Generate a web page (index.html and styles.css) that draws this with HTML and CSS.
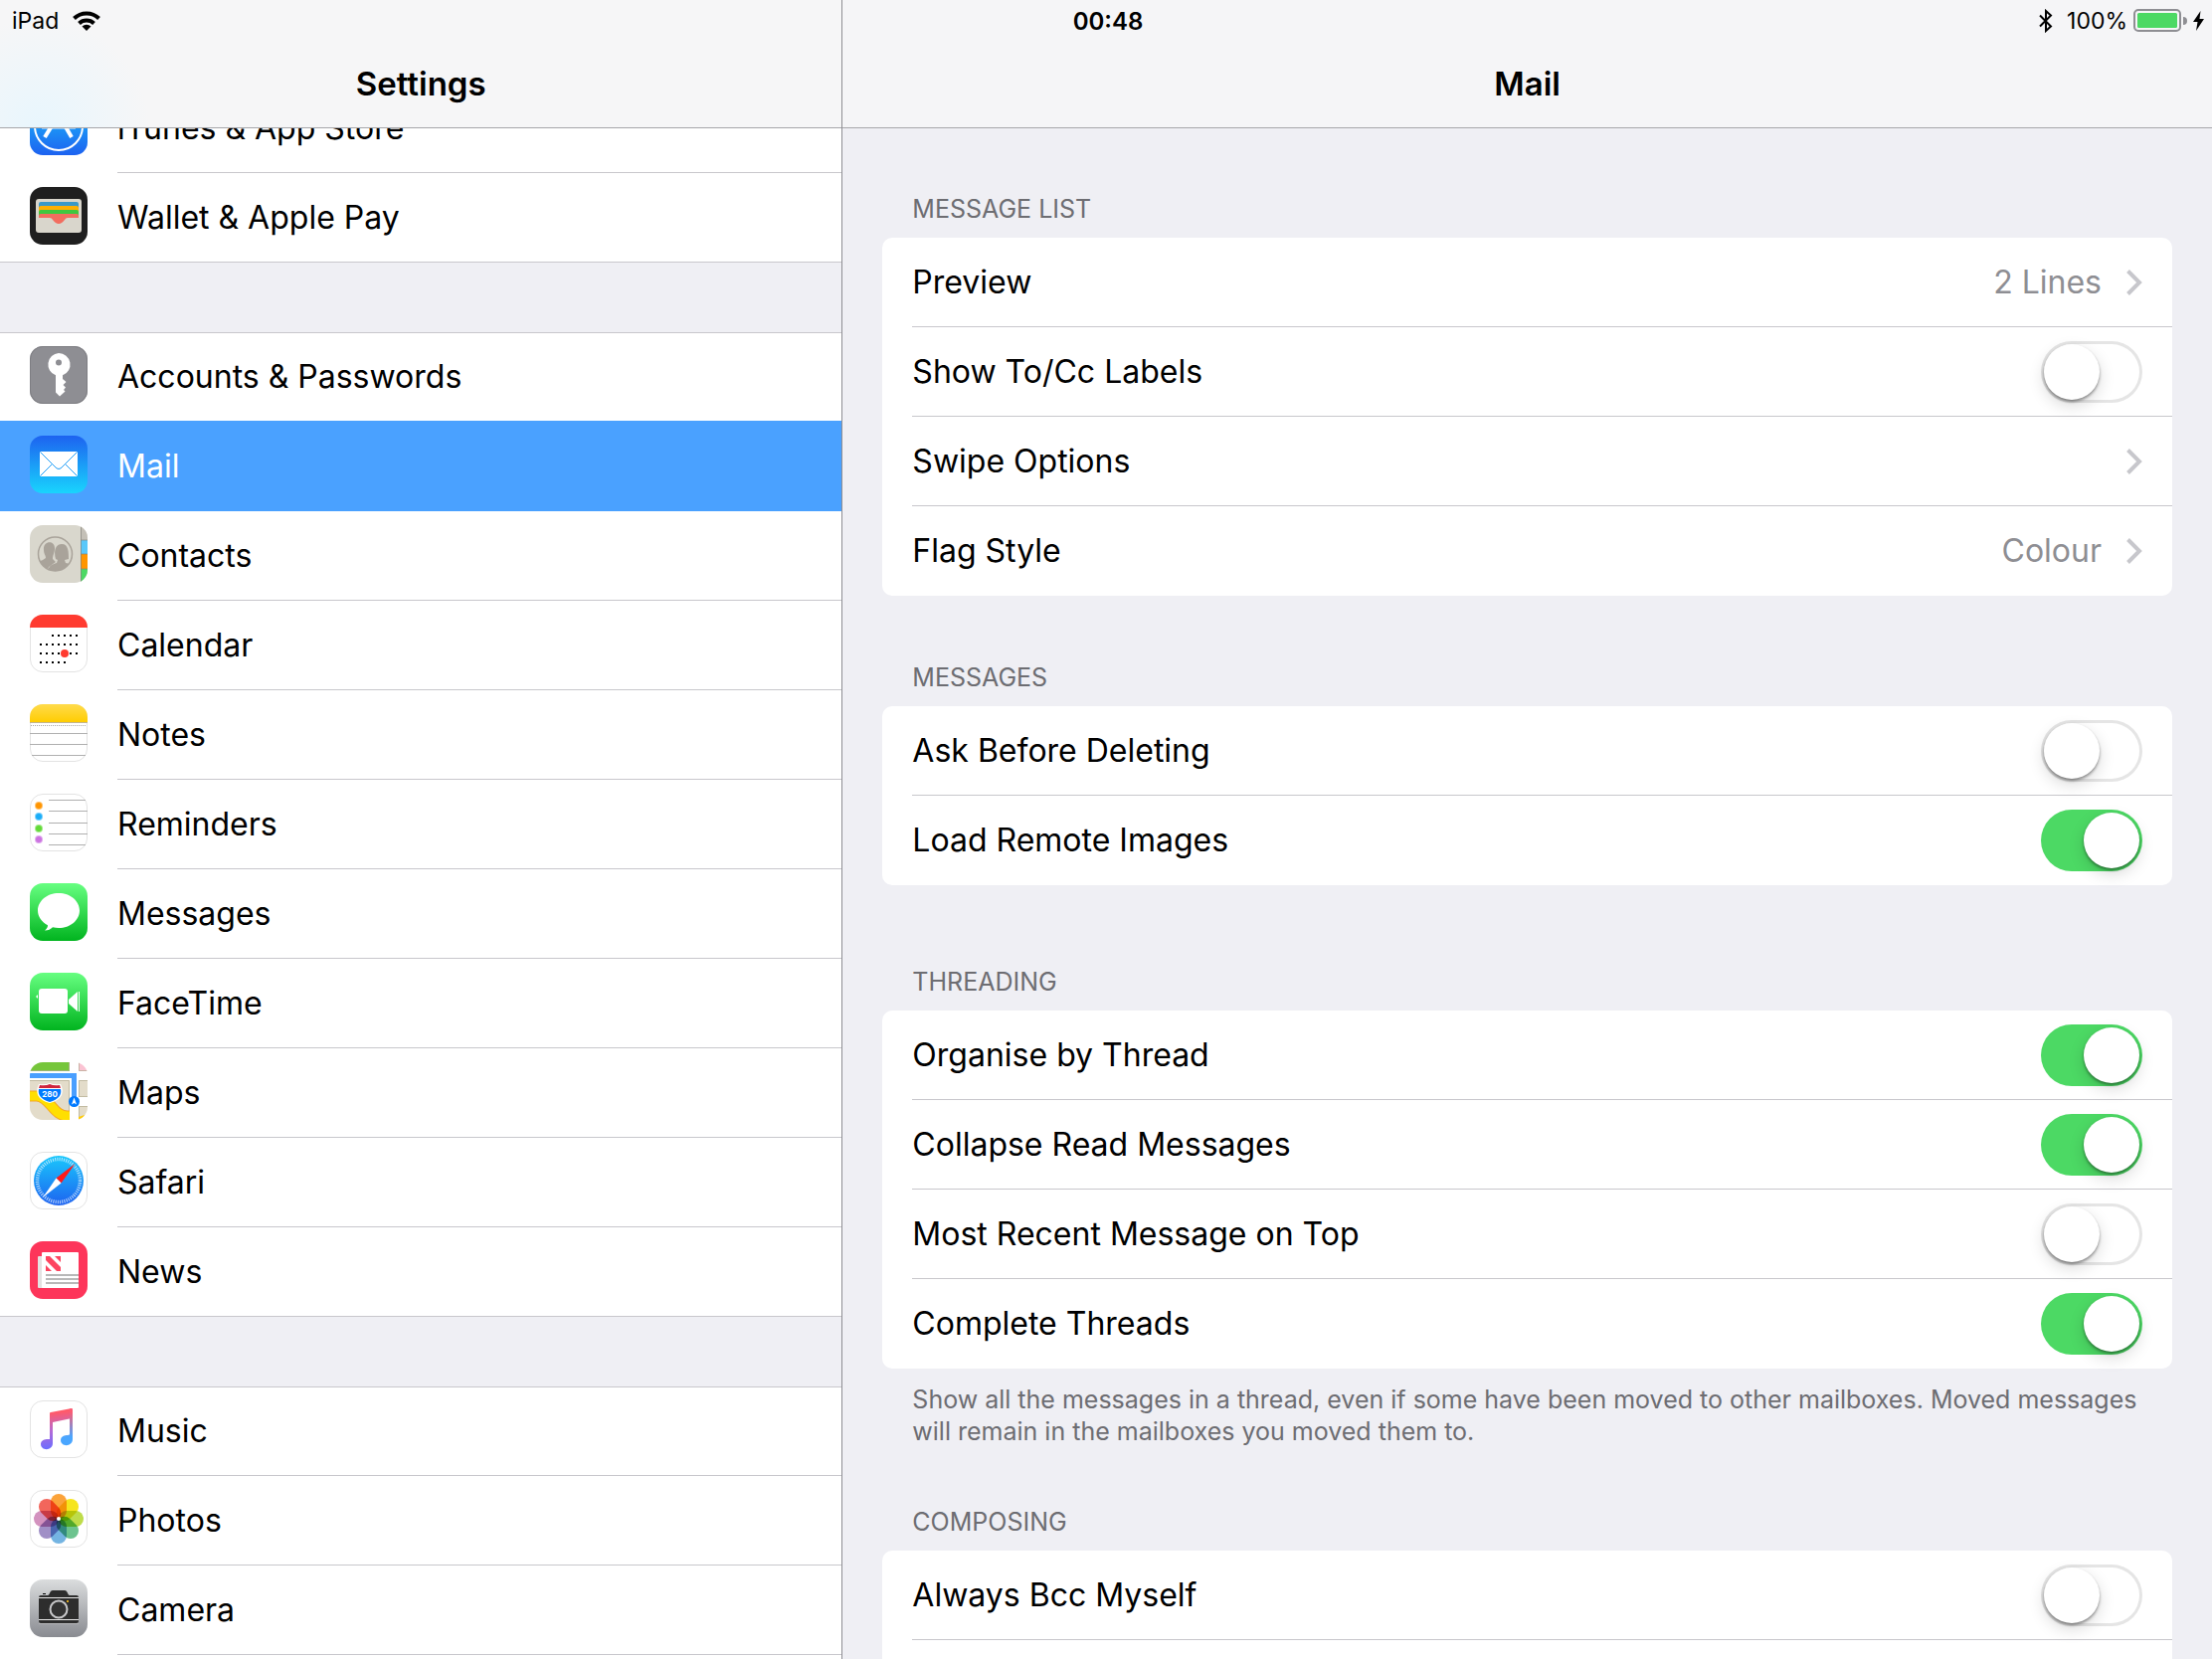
FILE: index.html
```html
<!DOCTYPE html>
<html lang="en">
<head>
    <meta charset="utf-8">
    <title>Settings</title>
    <link rel="stylesheet" href="styles.css">
</head>
<body>
    <div class="status-bar">
        <div class="status-left">
            <span>iPad</span>
            <svg width="28" height="20" viewBox="0 0 28 20">
                <g fill="none" stroke="#000" stroke-width="4">
                    <path d="M1.5 7.5a18 18 0 0 1 25 0"/>
                    <path d="M6.5 12.5a11 11 0 0 1 15 0"/>
                </g>
                <path d="M9.5 15.5a6.500 6.500 0 0 1 9 0L14 20z"/>
            </svg>
        </div>
        <div class="status-time">00:48</div>
        <div class="status-right">
            <svg width="14" height="24" viewBox="0 0 14 24">
                <path d="M1 6.500l11 11-5 4.500V2l5 4.500-11 11" fill="none" stroke="#000" stroke-width="2"/>
            </svg>
            <span class="percent">100%</span>
            <svg width="54" height="24" viewBox="0 0 54 24">
                <rect x="1" y="1" width="46" height="21" rx="4" fill="none" stroke="#8e8e93" stroke-width="2"/>
                <rect x="4" y="4" width="40" height="15" rx="1.500" fill="#4cd964"/>
                <path d="M50 8a4 4 0 0 1 0 8z" fill="#8e8e93"/>
            </svg>
            <svg width="11" height="20" viewBox="0 0 11 20">
                <path d="M7.500 0L0 11h4.500L3 20l8-12H6.500z"/>
            </svg>
        </div>
    </div>

    <nav class="sidebar">
        <header class="bar bar-tint"><h1>Settings</h1></header>
        <div class="list-scroll">
            <div class="list">
                <a class="item" href="#">
                    <svg class="icon" viewBox="0 0 58 58">
                        <defs><linearGradient id="store" x2="0" y2="1"><stop offset="0" stop-color="#1ac8fc"/><stop offset="1" stop-color="#1d62f0"/></linearGradient></defs>
                        <rect width="58" height="58" rx="13" fill="url(#store)"/>
                        <circle cx="29" cy="29" r="24" fill="none" stroke="#fff" stroke-width="2"/>
                        <path d="M31 14L15 40M27 14l15 26" stroke="#fff" stroke-width="4"/>
                        <path d="M12 30h34" stroke="#fff" stroke-width="3"/>
                    </svg>
                    <span class="name">iTunes &amp; App Store</span>
                </a>
                <a class="item" href="#">
                    <svg class="icon" viewBox="0 0 58 58">
                        <rect width="58" height="58" rx="13" fill="#1f1f1f"/>
                        <rect x="6" y="12" width="46" height="34" rx="3" fill="#d9d6cc"/>
                        <path d="M9 31V17q0-2 2-2h36q2 0 2 2v14z" fill="#3b99c9"/>
                        <path d="M9 31V21q0-2 2-2h36q2 0 2 2v10z" fill="#ffb003"/>
                        <path d="M9 31v-6q0-2 2-2h36q2 0 2 2v6z" fill="#40c740"/>
                        <path d="M9 31v-2q0-2 2-2h36q2 0 2 2v2H38q-2 0-3 2-3 4-6 4t-6-4q-1-2-3-2z" fill="#f26d5f"/>
                    </svg>
                    <span class="name">Wallet &amp; Apple Pay</span>
                </a>
            </div>

            <div class="list">
                <a class="item" href="#">
                    <svg class="icon" viewBox="0 0 58 58">
                        <rect width="58" height="58" rx="13" fill="#8e8e93"/>
                        <rect x=".5" y=".5" width="57" height="57" rx="12.500" fill="none" stroke="#7e7e83"/>
                        <path d="M29 7a11.500 11.500 0 0 1 4 22.300V33l3.500 3-3 3 2.500 2.500-2 2.500 1.500 1.500-5.500 5-4-4V29.300A11.500 11.500 0 0 1 29 7z" fill="#fff"/>
                        <circle cx="29" cy="16.500" r="3" fill="#8e8e93"/>
                    </svg>
                    <span class="name">Accounts &amp; Passwords</span>
                </a>
                <a class="item selected" href="#">
                    <svg class="icon" viewBox="0 0 58 58">
                        <defs><linearGradient id="mail" x2="0" y2="1"><stop offset="0" stop-color="#1d62f0"/><stop offset="1" stop-color="#19d5fd"/></linearGradient></defs>
                        <rect width="58" height="58" rx="13" fill="url(#mail)"/>
                        <rect x="10" y="16" width="38" height="25" rx="1" fill="#fff"/>
                        <path d="M10.500 16.500L25 31q4 5 8 0l14.500-14.500M10.500 40.500l12-12M47.500 40.500l-12-12" fill="none" stroke="#1e9cf6" stroke-width="1"/>
                    </svg>
                    <span class="name">Mail</span>
                </a>
                <a class="item" href="#">
                    <svg class="icon" viewBox="0 0 58 58">
                        <defs>
                            <clipPath id="round"><rect width="58" height="58" rx="13"/></clipPath>
                            <clipPath id="disc"><circle cx="25.500" cy="29" r="17"/></clipPath>
                        </defs>
                        <g clip-path="url(#round)">
                            <path d="M0 0h58v58H0z" fill="#d9d7cd"/>
                            <path d="M51 0h7v15h-7z" fill="#c4c0b7"/>
                            <path d="M51 15h7v14h-7z" fill="#5ac8fa"/>
                            <path d="M51 29h7v15h-7z" fill="#ff9500"/>
                            <path d="M51 44h7v14h-7z" fill="#4cd964"/>
                            <path d="M51.500 0v58M51 15h7M51 29h7M51 44h7" stroke="#86837a" stroke-opacity=".7"/>
                        </g>
                        <g clip-path="url(#disc)" fill="#a9a39a">
                            <path d="M14 25c-1-10 11-10 11-2 0 5-2 7-2 11l3 3-7 5-2 6L5 38l8-3 3-2c0-3-2-4-2-8z"/>
                            <path d="M26 34c-2-6-1-15 6-15s7 8 7 15l-4 1 1 3 9 2-6 10H18c0-9 3-10 9-12l1-3z"/>
                        </g>
                        <circle cx="25.500" cy="29" r="17" fill="none" stroke="#a9a39a" stroke-width="1.500"/>
                    </svg>
                    <span class="name">Contacts</span>
                </a>
                <a class="item" href="#">
                    <svg class="icon" viewBox="0 0 58 58">
                        <rect x=".5" y=".5" width="57" height="57" rx="12.500" fill="#fff" stroke="#e3e3e3"/>
                        <path d="M0 13A13 13 0 0 1 13 0h32a13 13 0 0 1 13 13z" fill="#ff3b30"/>
                        <path d="M22 21h27M10 30h39M10 39h39M10 48h27" stroke="#000" stroke-width="2" stroke-dasharray="2 4"/>
                        <circle cx="35" cy="39" r="4" fill="#ff3b30"/>
                    </svg>
                    <span class="name">Calendar</span>
                </a>
                <a class="item" href="#">
                    <svg class="icon" viewBox="0 0 58 58">
                        <defs><linearGradient id="note" x2="0" y2="1"><stop offset="0" stop-color="#ffdb4c"/><stop offset="1" stop-color="#ffcd02"/></linearGradient></defs>
                        <rect x=".5" y=".5" width="57" height="57" rx="12.500" fill="#fff" stroke="#e3e3e3"/>
                        <path d="M0 18v-5A13 13 0 0 1 13 0h32a13 13 0 0 1 13 13v5z" fill="url(#note)"/>
                        <path d="M0 18.500h58" stroke="#c2b48c"/>
                        <path d="M1 21.500h56" stroke="#a8a8a8" stroke-dasharray="1 1"/>
                        <path d="M0 29.500h58M0 40.500h58M2 51.500h54" stroke="#b0b0b0"/>
                    </svg>
                    <span class="name">Notes</span>
                </a>
                <a class="item" href="#">
                    <svg class="icon" viewBox="0 0 58 58">
                        <rect x=".5" y=".5" width="57" height="57" rx="12.500" fill="#fff" stroke="#e3e3e3"/>
                        <path d="M19 6.500h37M19 17.500h39M19 29.500h39M19 40.500h39M19 51.500h37" stroke="#b0b0b0"/>
                        <g stroke-opacity=".6" stroke-width="2">
                            <circle cx="9" cy="12" r="3" fill="#ff9500" stroke="#ff9500"/>
                            <circle cx="9" cy="23" r="3" fill="#1badf8" stroke="#1badf8"/>
                            <circle cx="9" cy="35" r="3" fill="#63da38" stroke="#63da38"/>
                            <circle cx="9" cy="46" r="3" fill="#cc73e1" stroke="#cc73e1"/>
                        </g>
                    </svg>
                    <span class="name">Reminders</span>
                </a>
                <a class="item" href="#">
                    <svg class="icon" viewBox="0 0 58 58">
                        <defs><linearGradient id="green" x2="0" y2="1"><stop offset="0" stop-color="#67ff81"/><stop offset="1" stop-color="#01b41f"/></linearGradient></defs>
                        <rect width="58" height="58" rx="13" fill="url(#green)"/>
                        <path d="M29 10c11.600 0 21 7.800 21 17.500S40.600 45 29 45c-2 0-4-.3-6-.8-2 2-5 3.400-8 3.300 2-1.500 3-3.500 3-5.300C12 39 8 33.600 8 27.500 8 17.800 17.400 10 29 10z" fill="#fff"/>
                    </svg>
                    <span class="name">Messages</span>
                </a>
                <a class="item" href="#">
                    <svg class="icon" viewBox="0 0 58 58">
                        <rect width="58" height="58" rx="13" fill="url(#green)"/>
                        <rect x="9" y="16" width="29" height="25" rx="3" fill="#fff"/>
                        <path d="M39 27l9-8v20l-9-8zM49 19h1v20h-1zM6 24l2-2v4z" fill="#fff"/>
                    </svg>
                    <span class="name">FaceTime</span>
                </a>
                <a class="item" href="#">
                    <svg class="icon" viewBox="0 0 58 58">
                        <g clip-path="url(#round)">
                            <path d="M0 0h58v58H0z" fill="#fff"/>
                            <path d="M0 0h40v9H0z" fill="#76c63b"/>
                            <path d="M49 0h9v9h-9z" fill="#fbc3d3"/>
                            <path d="M0 18h40v40H0zM49 18h9v17h-9zM49 44h9v14h-9z" fill="#e3dcca"/>
                            <path d="M0 18.500h39.500V58M49.500 35V18.500H58M49 34.500h9M49.500 58V44.500H58M0 8.500h39.500V0M49.500 0v8.500H58" fill="none" stroke="#b4ad91" stroke-opacity=".7"/>
                            <path d="M-2 34h9c14 1 16 21 32 20v9" fill="none" stroke="#f5a623" stroke-width="11"/>
                            <path d="M-2 34h9c14 1 16 21 32 20v9" fill="none" stroke="#ffdf00" stroke-width="9"/>
                            <path d="M40 18h9v40h-9z" fill="#fff"/>
                            <path d="M49 55l9-3v6h-9z" fill="#ffcb05"/>
                            <path d="M0 13.500h44.500V36" fill="none" stroke="#4a9fff" stroke-width="5"/>
                            <circle cx="44.500" cy="39.500" r="5.500" fill="#007aff"/>
                            <path d="M44.500 35.500l2.500 7-2.500-1.500-2.500 1.500z" fill="#fff"/>
                            <path d="M9 22q6 1 11-1 5 2 11 1 3 6 1 11-3 6-12 8-9-2-12-8-2-5 1-11z" fill="#fff"/>
                            <path d="M10 23q6 1 10-1 4 2 10 1l1 3H9z" fill="#d0243c"/>
                            <path d="M9 27h22q2 9-11 13Q7 36 9 27z" fill="#007aff"/>
                        </g>
                        <text class="route" x="20" y="35">280</text>
                    </svg>
                    <span class="name">Maps</span>
                </a>
                <a class="item" href="#">
                    <svg class="icon" viewBox="0 0 58 58">
                        <rect x=".5" y=".5" width="57" height="57" rx="12.500" fill="#fff" stroke="#e3e3e3"/>
                        <circle cx="29" cy="29" r="25" fill="url(#store)"/>
                        <circle cx="29" cy="29" r="21.500" fill="none" stroke="#fff" stroke-opacity=".7" stroke-width="3.500" stroke-dasharray="1 1.250"/>
                        <path d="M45.500 12L26.500 26.500l5 5z" fill="#ff1a1a"/>
                        <path d="M13 46l13.500-19.500 5 5z" fill="#fff"/>
                    </svg>
                    <span class="name">Safari</span>
                </a>
                <a class="item" href="#">
                    <svg class="icon" viewBox="0 0 58 58">
                        <rect width="58" height="58" rx="13" fill="#fd355a"/>
                        <rect x="8" y="15" width="8" height="32" rx="1" fill="#e4e2e2"/>
                        <rect x="12" y="11" width="37" height="36" rx="1" fill="#fff"/>
                        <path d="M16 15h4l11 11v4h-4L16 19zM25 15h6v6zM16 24v6h6z" fill="#fd4560"/>
                        <path d="M16 34h33M16 38h33M16 42h33" stroke="#b8b8b8" stroke-width="2"/>
                    </svg>
                    <span class="name">News</span>
                </a>
            </div>

            <div class="list">
                <a class="item" href="#">
                    <svg class="icon" viewBox="0 0 58 58">
                        <defs>
                            <linearGradient id="tune" gradientUnits="userSpaceOnUse" x1="26" y1="8" x2="30" y2="48"><stop offset=".1" stop-color="#ff5a6a"/><stop offset=".55" stop-color="#b46ad6"/><stop offset="1" stop-color="#6a6cff"/></linearGradient>
                            <linearGradient id="tune2" gradientUnits="userSpaceOnUse" x1="40" y1="8" x2="40" y2="44"><stop offset=".1" stop-color="#fb5c74"/><stop offset=".8" stop-color="#4aa6ff"/></linearGradient>
                        </defs>
                        <rect x=".5" y=".5" width="57" height="57" rx="12.500" fill="#fff" stroke="#e3e3e3"/>
                        <path d="M20 39V13q0-1 1-1l21-4v10l-19 4v21c0 8-12 8-12 1 0-4 4-5 7-5z" fill="url(#tune)"/>
                        <path d="M40 8.400l2-.4q1 0 1 1v30c0 8-12 8-12 1 0-4 4-5 7-5 2 0 2-1 2-2z" fill="url(#tune2)"/>
                    </svg>
                    <span class="name">Music</span>
                </a>
                <a class="item" href="#">
                    <svg class="icon petals" viewBox="0 0 58 58">
                        <rect x=".5" y=".5" width="57" height="57" rx="12.500" fill="#fff" stroke="#e3e3e3"/>
                        <rect class="petal" x="21" y="4" width="16" height="25" rx="8" fill="#fba33a"/>
                        <rect class="petal" x="21" y="4" width="16" height="25" rx="8" fill="#f6e51e" transform="rotate(45 29 29)"/>
                        <rect class="petal" x="21" y="4" width="16" height="25" rx="8" fill="#bedc4a" transform="rotate(90 29 29)"/>
                        <rect class="petal" x="21" y="4" width="16" height="25" rx="8" fill="#6cc38e" transform="rotate(135 29 29)"/>
                        <rect class="petal" x="21" y="4" width="16" height="25" rx="8" fill="#74b4e2" transform="rotate(180 29 29)"/>
                        <rect class="petal" x="21" y="4" width="16" height="25" rx="8" fill="#a08fc6" transform="rotate(225 29 29)"/>
                        <rect class="petal" x="21" y="4" width="16" height="25" rx="8" fill="#d392bf" transform="rotate(270 29 29)"/>
                        <rect class="petal" x="21" y="4" width="16" height="25" rx="8" fill="#f2665c" transform="rotate(315 29 29)"/>
                        <circle cx="29" cy="29" r="2" fill="#fff"/>
                    </svg>
                    <span class="name">Photos</span>
                </a>
                <a class="item" href="#">
                    <svg class="icon" viewBox="0 0 58 58">
                        <defs><linearGradient id="steel" x2="0" y2="1"><stop offset="0" stop-color="#dbddde"/><stop offset="1" stop-color="#898b91"/></linearGradient></defs>
                        <rect width="58" height="58" rx="13" fill="url(#steel)"/>
                        <path d="M9 18q0-2 2-2h7c2 0 2-5 5-5h12c3 0 3 5 5 5h7q2 0 2 2v24q0 2-2 2H11q-2 0-2-2z" fill="#2d2d2d"/>
                        <path d="M13 14.500h3" stroke="#000"/>
                        <path d="M9 18.500h40M9 40.500h40" stroke="#e8e8e8"/>
                        <path d="M9 44.500h40" stroke="#b4b5b8"/>
                        <circle cx="29" cy="30" r="8.500" fill="#333" stroke="#c8c8ca" stroke-width="2"/>
                        <path d="M37 21h2v2h-2z" fill="#d8a520"/>
                    </svg>
                    <span class="name">Camera</span>
                </a>
                <a class="item" href="#"><span class="name"></span></a>
            </div>
        </div>
    </nav>

    <main class="detail">
        <header class="bar"><h1>Mail</h1></header>
        <div class="detail-scroll">
            <section class="group">
                <h2>MESSAGE LIST</h2>
                <div class="card">
                    <a class="row" href="#">Preview <span class="value">2 Lines</span>
                        <svg class="chevron" viewBox="0 0 16 26"><path d="M1.500 1.500L13 13 1.500 24.500"/></svg></a>
                    <label class="row">Show To/Cc Labels <input class="switch" type="checkbox"></label>
                    <a class="row" href="#">Swipe Options <span class="value"></span>
                        <svg class="chevron" viewBox="0 0 16 26"><path d="M1.500 1.500L13 13 1.500 24.500"/></svg></a>
                    <a class="row" href="#">Flag Style <span class="value">Colour</span>
                        <svg class="chevron" viewBox="0 0 16 26"><path d="M1.500 1.500L13 13 1.500 24.500"/></svg></a>
                </div>
            </section>

            <section class="group">
                <h2>MESSAGES</h2>
                <div class="card">
                    <label class="row">Ask Before Deleting <input class="switch" type="checkbox"></label>
                    <label class="row">Load Remote Images <input class="switch" type="checkbox" checked></label>
                </div>
            </section>

            <section class="group threading">
                <h2>THREADING</h2>
                <div class="card">
                    <label class="row">Organise by Thread <input class="switch" type="checkbox" checked></label>
                    <label class="row">Collapse Read Messages <input class="switch" type="checkbox" checked></label>
                    <label class="row">Most Recent Message on Top <input class="switch" type="checkbox"></label>
                    <label class="row">Complete Threads <input class="switch" type="checkbox" checked></label>
                </div>
                <p class="footnote">Show all the messages in a thread, even if some have been moved to other mailboxes. Moved messages will remain in the mailboxes you moved them to.</p>
            </section>

            <section class="group composing">
                <h2>COMPOSING</h2>
                <div class="card">
                    <label class="row">Always Bcc Myself <input class="switch" type="checkbox"></label>
                    <a class="row" href="#"></a>
                </div>
            </section>
        </div>
    </main>
</body>
</html>
```
FILE: styles.css
```css
* {
    box-sizing: border-box;
}
body {
    margin: 0;
    height: 100vh;
    display: grid;
    grid-template-columns: 38.1% 1fr;
    overflow: hidden;
    background-color: #efeff4;
    color: #000;
    font-family: Inter, "Liberation Sans", sans-serif;
    font-size: 32px;
}
a {
    color: inherit;
    text-decoration: none;
}

/* Status bar, lies over both headers */
.status-bar {
    position: absolute;
    top: 0;
    left: 0;
    right: 0;
    z-index: 2;
    height: 42px;
    padding: 0 8px 0 12px;
    display: grid;
    grid-template-columns: 1fr auto 1fr;
    align-items: center;
    font-size: 23px;
}
.status-left, .status-right {
    display: flex;
    align-items: center;
    gap: 14px;
}
.status-right {
    justify-content: flex-end;
    gap: 6px;
}
.status-time {
    font-size: 24px;
    font-weight: 600;
}
.percent {
    margin-left: 8px;
}

/* Panes */
.sidebar, .detail {
    display: flex;
    flex-direction: column;
    min-width: 0;
    min-height: 0;
}
.sidebar {
    border-right: 1px solid #8e8e93;
}
.bar {
    flex: none;
    padding-top: 40px;
    border-bottom: 1px solid #a7a7aa;
    background-color: #f5f5f7;
}
.bar-tint {
    background: radial-gradient(circle at 40px 128px, #e8f6fd, #f6f6f7 110px);
}
.bar h1 {
    margin: 0;
    font-size: 33px;
    font-weight: 600;
    line-height: 88px;
    text-align: center;
}
.list-scroll, .detail-scroll {
    flex: 1;
    min-height: 0;
    overflow: hidden;
}

/* Sidebar list */
.list {
    margin-bottom: 70px;
    border-bottom: 1px solid #c8c7cc;
    background-color: #fff;
}
.list:first-child {
    margin-top: -45px; /* scrolled under the header */
}
.item {
    display: flex;
    gap: 30px;
    height: 90px;
    padding-left: 30px;
}
.item:first-child {
    border-top: 1px solid #c8c7cc;
}
.item:last-child {
    height: 89px;
}
.icon {
    flex: none;
    width: 58px;
    height: 58px;
    margin-top: 14px;
}
.item:first-child .icon {
    margin-top: 13px;
}
.name {
    flex: 1;
    display: flex;
    align-items: center;
    border-bottom: 1px solid #c8c7cc;
}
.item:first-child .name {
    padding-bottom: 2px;
}
.item:last-child .name {
    border-bottom: none;
}
/* Covers the separator of the row above */
.selected {
    position: relative;
    height: 91px;
    margin-top: -1px;
    padding-top: 1px;
    background-color: #4aa1ff;
    color: #fff;
}
.selected .name {
    border-color: #4aa1ff;
}
.route {
    fill: #fff;
    font-size: 8px;
    font-weight: 700;
    text-anchor: middle;
}
.petals {
    isolation: isolate;
}
.petal {
    mix-blend-mode: multiply;
}

/* Detail groups */
.detail-scroll {
    padding: 65px 40px 0;
}
.group {
    margin-bottom: 66px;
}
.group h2 {
    margin: 0 30px 13px;
    color: #6d6d72;
    font-size: 25px;
    font-weight: 400;
    line-height: 32px;
}
.threading {
    margin-top: 81px;
    margin-bottom: 0;
}
.composing {
    margin-top: 59px;
}
.card {
    padding-left: 30px;
    border-radius: 10px;
    background-color: #fff;
}
.row {
    display: flex;
    align-items: center;
    justify-content: space-between;
    height: 90px;
    padding-right: 30px;
    border-bottom: 1px solid #c8c7cc;
}
.row:last-child {
    border-bottom-color: transparent;
}
.value {
    margin-left: auto;
    margin-right: 25px;
    color: #8e8e93;
}
.chevron {
    width: 16px;
    height: 26px;
    fill: none;
    stroke: #c7c7cc;
    stroke-width: 4;
}
.footnote {
    margin: 15px 0 59px 30px;
    color: #6d6d72;
    font-size: 25px;
    line-height: 32px;
}

/* Switch */
.switch {
    appearance: none;
    flex: none;
    width: 102px;
    height: 62px;
    margin: 0;
    padding: 3px;
    border-radius: 31px;
    background-color: #fff;
    box-shadow: inset 0 0 0 3px #e5e5e5;
}
.switch::before {
    content: "";
    display: block;
    width: 56px;
    height: 56px;
    border-radius: 50%;
    background-color: #fff;
    box-shadow: 0 2px 3px rgba(0, 0, 0, 0.4), 0 6px 16px rgba(0, 0, 0, 0.15);
}
.switch:checked {
    background-color: #4cd964;
    box-shadow: none;
}
.switch:checked::before {
    margin-left: 40px;
}
```
